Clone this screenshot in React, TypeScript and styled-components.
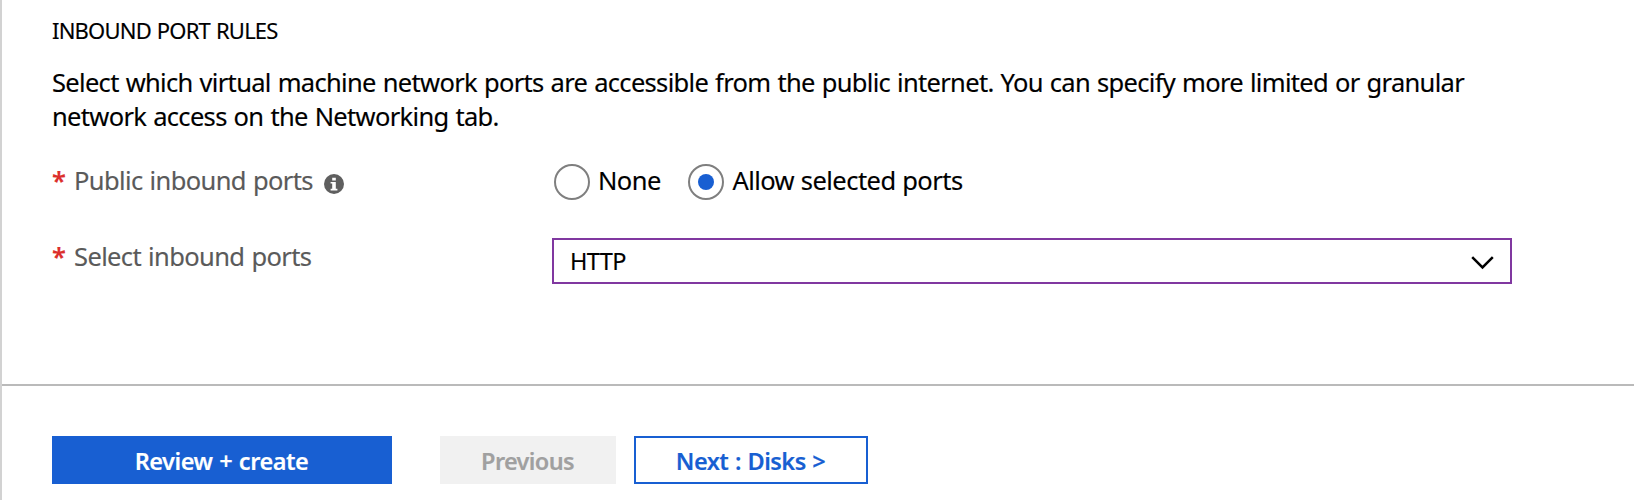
import React from 'react';
import styled, { createGlobalStyle } from 'styled-components';

const GlobalStyle = createGlobalStyle`
  * { box-sizing: border-box; }
  body {
    margin: 0;
    background: #fff;
    color: #000;
    font-family: "Segoe UI", "Noto Sans", "Open Sans", sans-serif;
    -webkit-text-stroke: 0.15px currentColor;
  }
`;

const Blade = styled.main`
  display: flex;
  flex-direction: column;
  height: 500px;
  border-left: 2px solid #d2d2d2;
  overflow: hidden;
`;

const Content = styled.section`
  height: 384px;
  padding: 15px 120px 0 50px;
`;

const SectionTitle = styled.h2`
  margin: 0 0 20px;
  font-size: 22px;
  font-weight: 400;
  line-height: 30px;
  letter-spacing: -0.8px;
  word-spacing: 1px;
`;

const Description = styled.p`
  margin: 0 0 31px;
  font-size: 25.5px;
  line-height: 34px;
  letter-spacing: -0.68px;
  word-spacing: 1px;
  white-space: nowrap;
`;

const FieldRow = styled.div<{ $height: number; $gap?: number }>`
  display: grid;
  grid-template-columns: 500px 960px;
  align-items: start;
  height: ${(p) => p.$height}px;
  margin-bottom: ${(p) => p.$gap ?? 0}px;
`;

const FieldLabel = styled.label<{ $lineHeight: number }>`
  display: flex;
  color: #5a5a5a;
  font-size: 25.5px;
  line-height: ${(p) => p.$lineHeight}px;
  letter-spacing: -0.62px;
  word-spacing: 1px;
  white-space: nowrap;
`;

const Required = styled.span`
  width: 22px;
  color: #dc2f2b;
  font-weight: 600;
`;

const InfoIcon = styled.svg`
  width: 20px;
  height: 20px;
  margin: 10px 0 0 11.4px;
`;

const RadioGroup = styled.div`
  display: flex;
  padding-left: 2px;
  gap: 27.6px;
`;

const RadioOption = styled.div`
  display: flex;
  gap: 8px;
  font-size: 25.5px;
  line-height: 33px;
  letter-spacing: -0.54px;
  word-spacing: 0.6px;
  white-space: nowrap;
`;

const RadioCircle = styled.span<{ $checked?: boolean }>`
  display: flex;
  align-items: center;
  justify-content: center;
  width: 36px;
  height: 36px;
  border: 2px solid #7f7f7f;
  border-radius: 50%;

  &::after {
    content: '';
    width: 16px;
    height: 16px;
    border-radius: 50%;
    background: ${(p) => (p.$checked ? '#185fd2' : 'transparent')};
  }
`;

const SelectBox = styled.div`
  display: flex;
  align-items: center;
  justify-content: space-between;
  height: 46px;
  padding: 0 16px;
  border: 2px solid #8038a0;
  font-size: 23.5px;
  line-height: 42px;
  letter-spacing: -0.6px;
`;

const Chevron = styled.svg`
  width: 23px;
  height: 14px;
  margin-top: 4px;
`;

const Footer = styled.footer`
  display: flex;
  flex: 1;
  padding: 50px 0 0 50px;
  border-top: 2px solid #bababa;
`;

type Variant = 'primary' | 'disabled' | 'outline';

const palette: Record<Variant, { bg: string; fg: string; border: string }> = {
  primary: { bg: '#185fd2', fg: '#fff', border: '#185fd2' },
  disabled: { bg: '#f1f1f1', fg: '#a0a0a0', border: '#f1f1f1' },
  outline: { bg: '#fff', fg: '#185fd2', border: '#185fd2' },
};

const Button = styled.button<{ $variant: Variant; $width: number; $gap?: number; $spacing: number }>`
  width: ${(p) => p.$width}px;
  height: 48px;
  margin: 0 ${(p) => p.$gap ?? 0}px 0 0;
  padding: 2px 1px 0 0;
  border: 2px solid ${(p) => palette[p.$variant].border};
  background: ${(p) => palette[p.$variant].bg};
  color: ${(p) => palette[p.$variant].fg};
  font-family: inherit;
  font-size: 23.5px;
  font-weight: 600;
  line-height: 42px;
  letter-spacing: ${(p) => p.$spacing}px;
  word-spacing: 1px;
  white-space: nowrap;
`;

export default function App() {
  return (
    <>
      <GlobalStyle />
      <Blade>
        <Content>
          <SectionTitle>INBOUND PORT RULES</SectionTitle>
          <Description>
            Select which virtual machine network ports are accessible from the public internet. You can specify more limited or granular
            <br />
            network access on the Networking tab.
          </Description>
          <FieldRow $height={36} $gap={38}>
            <FieldLabel $lineHeight={33}>
              <Required>*</Required>
              Public inbound ports
              <InfoIcon viewBox="0 0 20 20" aria-label="Info">
                <circle cx="10" cy="10" r="10" fill="#5f5f5f" />
                <path d="M8.2 3.8h3.6v2.6H8.2zM6.6 8h5.2v6.8h1.6v1.6H6.6v-1.6h1.6V9.6H6.6z" fill="#fff" />
              </InfoIcon>
            </FieldLabel>
            <RadioGroup>
              <RadioOption>
                <RadioCircle />
                None
              </RadioOption>
              <RadioOption>
                <RadioCircle $checked />
                Allow selected ports
              </RadioOption>
            </RadioGroup>
          </FieldRow>
          <FieldRow $height={46}>
            <FieldLabel $lineHeight={36}>
              <Required>*</Required>
              Select inbound ports
            </FieldLabel>
            <SelectBox>
              HTTP
              <Chevron viewBox="0 0 23 14">
                <path d="M1.2 1.2 11.5 11.5 21.8 1.2" fill="none" stroke="#000" strokeWidth="2.5" />
              </Chevron>
            </SelectBox>
          </FieldRow>
        </Content>
        <Footer>
          <Button $variant="primary" $width={340} $gap={48} $spacing={-0.46}>Review + create</Button>
          <Button $variant="disabled" $width={176} $gap={18} $spacing={-0.65} disabled>Previous</Button>
          <Button $variant="outline" $width={234} $spacing={-0.52}>Next : Disks &gt;</Button>
        </Footer>
      </Blade>
    </>
  );
}
